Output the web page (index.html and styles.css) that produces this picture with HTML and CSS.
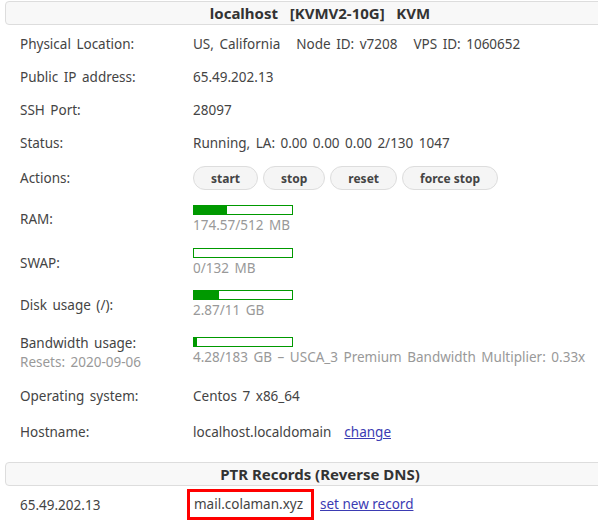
FILE: index.html
```html
<!DOCTYPE html>
<html>
<head>
<meta charset="utf-8">
<link rel="stylesheet" href="styles.css">
</head>
<body>
<div class="panel">
  <div class="head">localhost&nbsp;&nbsp;&nbsp;[KVMV2-10G]&nbsp;&nbsp;&nbsp;KVM</div>
  <div class="rows">
    <div class="row r-std"><div class="label">Physical Location:</div><div class="value">US, California<span class="gap">Node ID: v7208</span><span class="gap">VPS ID: 1060652</span></div></div>
    <div class="row r-std"><div class="label">Public IP address:</div><div class="value">65.49.202.13</div></div>
    <div class="row r-std"><div class="label">SSH Port:</div><div class="value">28097</div></div>
    <div class="row r-std"><div class="label">Status:</div><div class="value">Running, LA: 0.00 0.00 0.00 2/130 1047</div></div>
    <div class="row r-actions"><div class="label">Actions:</div><div class="value buttons"><button class="btn">start</button><button class="btn">stop</button><button class="btn">reset</button><button class="btn">force stop</button></div></div>
    <div class="row r-ram"><div class="label">RAM:</div><div class="value meter"><div class="bar"><div class="fill" style="width:34%"></div></div><div class="muted">174.57/512 MB</div></div></div>
    <div class="row r-swap"><div class="label">SWAP:</div><div class="value meter"><div class="bar"><div class="fill" style="width:0%"></div></div><div class="muted">0/132 MB</div></div></div>
    <div class="row r-disk"><div class="label">Disk usage (/):</div><div class="value meter"><div class="bar"><div class="fill" style="width:26%"></div></div><div class="muted">2.87/11 GB</div></div></div>
    <div class="row r-bw"><div class="label two"><div>Bandwidth usage:</div><div class="muted">Resets: 2020-09-06</div></div><div class="value meter"><div class="bar"><div class="fill" style="width:3%"></div></div><div class="muted">4.28/183 GB – USCA_3 Premium Bandwidth Multiplier: 0.33x</div></div></div>
    <div class="row r-os"><div class="label">Operating system:</div><div class="value">Centos 7 x86_64</div></div>
    <div class="row r-host"><div class="label">Hostname:</div><div class="value">localhost.localdomain<a class="link host-link" href="#">change</a></div></div>
  </div>
  <div class="head">PTR Records (Reverse DNS)</div>
  <div class="row r-ptr"><div class="label">65.49.202.13</div><div class="value"><span class="boxed">mail.colaman.xyz</span><a class="link ptr-link" href="#">set new record</a></div></div>
</div>
</body>
</html>
```
FILE: styles.css
```css
html, body {
  margin: 0;
  padding: 0;
  overflow: hidden;
  background: #fff;
}
body {
  font-family: "Noto Sans", "Open Sans", sans-serif;
  font-size: 13.5px;
  word-spacing: 2px;
  color: #444;
}
.panel {
  width: 630px;
  margin-left: 5px;
  padding-top: 1px;
}
.head {
  height: 22px;
  line-height: 22px;
  border: 1px solid #ddd;
  border-radius: 4px;
  background: #f8f8f8;
  text-align: center;
  font-weight: bold;
  font-size: 15px;
  word-spacing: 0;
  color: #333;
}
.rows {
  padding-top: 2px;
}
.row {
  display: grid;
  grid-template-columns: 188px 1fr;
  align-items: center;
}
.label {
  padding-left: 15px;
  white-space: nowrap;
}
.value {
  white-space: nowrap;
}
.r-std { height: 33px; }
.r-actions { height: 38px; }
.r-ram { height: 43px; }
.r-swap { height: 46px; }
.r-disk { height: 38px; }
.r-bw { height: 56px; }
.r-os { height: 32px; }
.r-host { height: 40px; }
.gap { margin-left: 16px; }
.buttons {
  display: flex;
  gap: 5px;
}
.btn {
  height: 24px;
  padding: 0 17px;
  border: 1px solid #ddd;
  border-radius: 12px;
  background: #f5f5f5;
  font-family: inherit;
  font-weight: bold;
  font-size: 12px;
  word-spacing: 0;
  color: #444;
}
.meter {
  margin-bottom: -2px;
  line-height: 20px;
}
.r-swap .meter,
.r-disk .meter { margin-bottom: 1px; }
.r-bw .meter { margin-bottom: 0; }
.bar {
  width: 98px;
  height: 8px;
  border: 1px solid #009900;
  background: #fff;
}
.fill {
  height: 100%;
  background: #009900;
}
.muted { color: #999; }
.two {
  line-height: 19px;
  padding-top: 2px;
}
.link {
  color: #3b3bb3;
  text-decoration: underline;
  word-spacing: 0;
}
.host-link { margin-left: 13px; }
.rows + .head { margin-top: 10px; }
.head + .r-ptr { margin-top: 3px; }
.r-ptr { height: 31px; }
.boxed {
  display: inline-block;
  margin-left: -6px;
  padding: 4px 8px 4px 4px;
  border: 3px solid #f00;
  line-height: 17px;
  color: #444;
  word-spacing: 0;
}
.ptr-link { margin-left: 6px; }
```
